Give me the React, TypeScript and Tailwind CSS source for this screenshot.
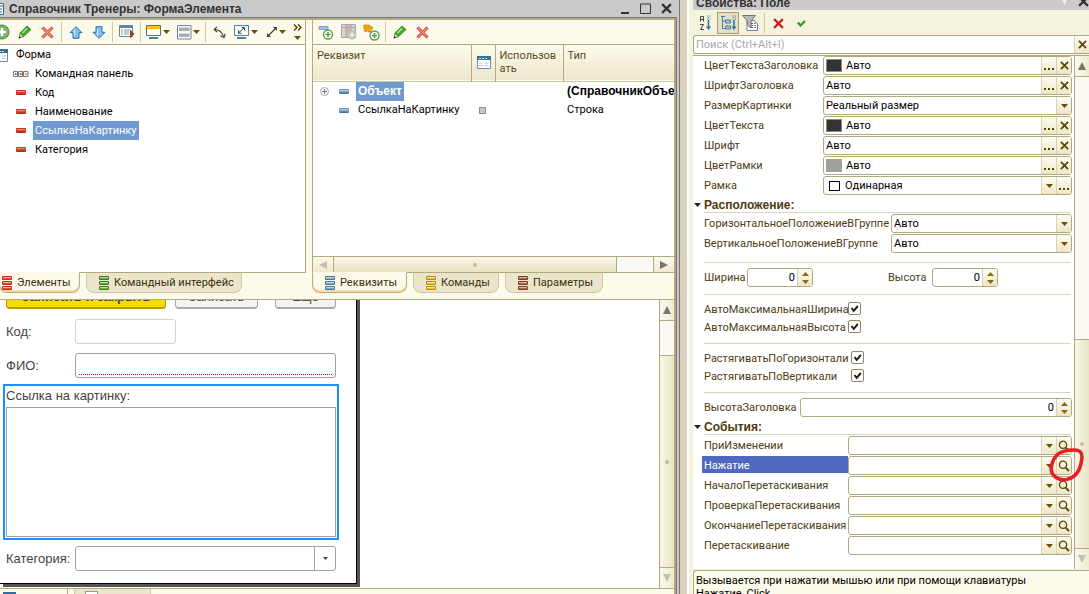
import { ReactNode, useId, useState } from 'react'
import clsx from 'clsx'

/* ---------- icons ---------- */

function Caret({ up = false, color = '#6b4f00' }: { up?: boolean; color?: string }) {
  return (
    <svg width="7" height="4" viewBox="0 0 7 4" className="shrink-0">
      <path d={up ? 'M0 4h7L3.5 0z' : 'M0 0h7L3.5 4z'} fill={color} />
    </svg>
  )
}

function CrossIcon({ size = 9, color = '#5c4600', width = 2 }: { size?: number; color?: string; width?: number }) {
  return (
    <svg width={size} height={size} viewBox="0 0 10 10" className="shrink-0">
      <path d="M1 1l8 8M9 1l-8 8" stroke={color} strokeWidth={width} fill="none" />
    </svg>
  )
}

function DotsIcon() {
  return (
    <svg width="11" height="11" viewBox="0 0 11 11">
      <path d="M0 8h2v2H0zM4 8h2v2H4zM8 8h2v2H8z" fill="#5c4600" />
    </svg>
  )
}

function SearchIcon() {
  return (
    <svg width="12" height="12" viewBox="0 0 12 12" fill="none" stroke="#5c4600">
      <circle cx="5" cy="4.8" r="3.6" strokeWidth="1.3" />
      <path d="M7.6 7.6l3.4 3.4" strokeWidth="1.9" />
    </svg>
  )
}

function PlusIcon() {
  return (
    <svg width="16" height="16" viewBox="0 0 16 16">
      <circle cx="8" cy="8" r="7" fill="#7cb56b" stroke="#4b8a3c" />
      <path d="M8 4v8M4 8h8" stroke="#fff" strokeWidth="2.4" />
    </svg>
  )
}

function PencilIcon() {
  return (
    <svg width="14" height="14" viewBox="0 0 14 14">
      <path d="M9 1l4 3.6-7.4 7L2 8z" fill="#3fae2a" stroke="#2b7d1c" strokeWidth=".8" />
      <path d="M9 3.4L4.4 8" stroke="#a6e38f" strokeWidth="1.5" />
      <path d="M2 8l3.6 3.6L1 13z" fill="#e8d9a0" stroke="#4a5a2c" strokeWidth=".7" />
      <path d="M.8 13.4l.6-2.2 1.6 1.5z" fill="#222" />
    </svg>
  )
}

function DeleteIcon() {
  return (
    <svg width="13" height="13" viewBox="0 0 13 13" fill="none">
      <path d="M1.5 1.5l10 10M11.5 1.5l-10 10" stroke="#cf3b31" strokeWidth="3" />
      <path d="M2 2l9 9M11 2l-9 9" stroke="#ff8a7d" strokeWidth="1.3" />
    </svg>
  )
}

function ArrowIcon({ down = false }: { down?: boolean }) {
  return (
    <svg width="14" height="13" viewBox="0 0 14 13">
      <path
        d={down ? 'M7 12.3L1 6.3h3v-5.6h6v5.6h3z' : 'M7 .7L1 6.7h3v5.6h6V6.7h3z'}
        fill="#7fc0f0"
        stroke="#2f6ea8"
        strokeLinejoin="round"
      />
      <path d="M5.5 3v7" stroke="#d3edff" />
    </svg>
  )
}

function ListRunIcon() {
  return (
    <svg width="16" height="14" viewBox="0 0 16 14">
      <path d="M.5.5h13v11H.5z" fill="#fff" stroke="#6b8499" />
      <path d="M1 1h12v2H1z" fill="#5b83a6" />
      <path d="M2 5h2M2 7h2M2 9h2M5 5h6M5 7h5M5 9h5" stroke="#7d93a5" />
      <path d="M11 4.5l4.5 4.5-4.5 4.5z" fill="#8a4a2a" />
    </svg>
  )
}

function ScreenIcon() {
  return (
    <svg width="16" height="16" viewBox="0 0 16 16">
      <path d="M.5 1.5h14v10H.5z" fill="#fffef8" stroke="#55728a" />
      <path d="M1 2h13v3H1z" fill="#ffc20e" />
      <path d="M3 14h9" stroke="#4f7ea6" strokeWidth="2" />
    </svg>
  )
}

function LayoutIcon() {
  return (
    <svg width="15" height="15" viewBox="0 0 15 15">
      <path d="M.5.5h13.500v13.500H.5z" fill="#fdfdfb" stroke="#6f8896" />
      <path d="M2 2.500h10.500v3.500H2zM2 8.500h10.500v3.500H2z" fill="#a9adaf" />
    </svg>
  )
}

function CurveIcon() {
  return (
    <svg width="13" height="13" viewBox="0 0 13 13" fill="none" stroke="#3c3c3c">
      <path d="M1.500 3.500c4.500 0 7.500 2.500 9 7" strokeWidth="1.100" />
      <path d="M4 .8L1.200 3.500 4 6" strokeWidth="1.100" />
      <path d="M7.500 9.800l3.500 1.700 1.200-3.500" strokeWidth="1.100" />
    </svg>
  )
}

function ScreenFitIcon() {
  return (
    <svg width="16" height="16" viewBox="0 0 16 16">
      <path d="M.5 1.500h14v10H.5z" fill="#f5fafd" stroke="#5b7f9e" />
      <path d="M5 8.500l5-4.500M7.500 3.500h3v3M4.500 6.500v2.800h3" fill="none" stroke="#444" />
      <path d="M3 14h9" stroke="#4f7ea6" strokeWidth="2" />
    </svg>
  )
}

function ExpandIcon() {
  return (
    <svg width="12" height="12" viewBox="0 0 12 12">
      <path d="M2 10l8-8" stroke="#444" strokeWidth="1.200" />
      <path d="M7 1h4v4zM1 7v4h4z" fill="#444" />
    </svg>
  )
}

function AddFieldIcon() {
  return (
    <svg width="16" height="16" viewBox="0 0 16 16">
      <path d="M1 2.500h9v3H1z" fill="#9dc2dd" stroke="#7ea3bd" />
      <circle cx="10" cy="10.500" r="4.500" fill="#fff" stroke="#5f9e4e" strokeWidth="1.400" />
      <path d="M10 8v5M7.500 10.500h5" stroke="#57a344" strokeWidth="1.600" />
    </svg>
  )
}

function AddColumnIcon() {
  return (
    <svg width="16" height="16" viewBox="0 0 16 16">
      <path d="M.5.500h14v13H.5z" fill="#d8d6d0" stroke="#a9a7a3" />
      <path d="M5 1h5v12H5z" fill="#d3b3b0" />
      <path d="M5 .5v13M10 .5v13M1 3.500h13" stroke="#a9a7a3" />
      <circle cx="11" cy="11" r="4.500" fill="#b9c7b2" />
      <path d="M11 8.500v5M8.500 11h5" stroke="#eef2ec" strokeWidth="1.500" />
    </svg>
  )
}

function AddPartIcon() {
  return (
    <svg width="17" height="17" viewBox="0 0 17 17">
      <path d="M.8 1h6v2l2-.8 1 2.600-2 1 .5 2.200H5.500L5 6.500 3 8 .8 6.500 3 4.500H.8z" fill="#f0a30a" stroke="#b87700" strokeWidth=".6" />
      <circle cx="11.500" cy="11.500" r="4.500" fill="#fff" stroke="#5f9e4e" strokeWidth="1.400" />
      <path d="M11.500 9v5M9 11.500h5" stroke="#57a344" strokeWidth="1.600" />
    </svg>
  )
}

function FormIcon() {
  return (
    <svg width="14" height="13" viewBox="0 0 14 13" className="shrink-0">
      <path d="M.5.500h13v12H.5z" fill="#fff" stroke="#6f8ea8" />
      <path d="M0 0h14v4H0z" fill="#356f9f" />
      <path d="M2 2.500h2M5 2.500h2M8 2.500h2" stroke="#cfe4f4" />
      <path d="M2 7h4M2 9.500h4M7.500 7h4M7.500 9.500h4" stroke="#b4c4d1" />
    </svg>
  )
}

function CommandBarIcon() {
  return (
    <svg width="16" height="6" viewBox="0 0 16 6" className="shrink-0">
      <path d="M.5.500h4v5h-4zM5.500.500h4v5h-4zM10.500.500h4.500v5h-4.500z" fill="#f4f4f4" stroke="#777" />
      <path d="M2 2h1.500v2H2z" fill="#3f73b5" />
      <path d="M7 2h1.500v2H7z" fill="#d33" />
      <path d="M12 2h1.500v2H12z" fill="#c9a12c" />
    </svg>
  )
}

function DashIcon({ fill, stroke }: { fill: string; stroke: string }) {
  return (
    <svg width="10" height="5" viewBox="0 0 10 5" className="shrink-0">
      <rect x="0" y="0" width="10" height="5" rx="1" fill={stroke} />
      <path d="M0 2h10" stroke={fill} strokeWidth="3" />
      <path d="M1 1.500h8" stroke="#fff" strokeOpacity=".4" />
    </svg>
  )
}

function StackIcon({ fill, stroke }: { fill: string; stroke: string }) {
  return (
    <svg width="10" height="14" viewBox="0 0 10 14" className="shrink-0">
      {[0, 5, 10].map(y => (
        <g key={y}>
          <rect x="0" y={y} width="10" height="4" rx="1" fill={stroke} />
          <path d={`M1 ${y + 2}h8`} stroke={fill} strokeWidth="2" />
          <path d={`M1 ${y + 1.5}h8`} stroke="#fff" strokeOpacity=".5" />
        </g>
      ))}
    </svg>
  )
}

function SortIcon() {
  return (
    <svg width="13" height="16" viewBox="0 0 13 16" fill="none">
      <path d="M1.500 6.500v-5h3v5M1.500 4.500h3M1 9.500h3.500L1.500 14.500h3.500" stroke="#444" />
      <path d="M9.500 5v8" stroke="#2d6ba0" strokeWidth="1.500" />
      <path d="M7 11.500h5L9.500 15z" fill="#2d6ba0" />
      <path d="M8 1h1M10.500 1h1M9 2.500h1M8 4h1M10.500 4h1" stroke="#2d6ba0" />
    </svg>
  )
}

function TreeSortIcon() {
  return (
    <svg width="17" height="16" viewBox="0 0 17 16" fill="none">
      <path d="M1 1.500h4M2.500 2v12M2.500 6h3M2.500 13.500h3" stroke="#4f7d9f" />
      <path d="M5.500 5h5v3h-5zM5.500 11h5v3h-5z" fill="#9cc3df" stroke="#4f7d9f" />
      <path d="M14 5v8" stroke="#2d6ba0" strokeWidth="1.500" />
      <path d="M11.500 11.500h5L14 15z" fill="#2d6ba0" />
      <path d="M12.500 1h1M15 1h1M13.500 2.500h1M12.500 4h1M15 4h1" stroke="#2d6ba0" />
    </svg>
  )
}

function FilterIcon() {
  return (
    <svg width="17" height="16" viewBox="0 0 17 16">
      <path d="M5 5.500h7l3.500 3v7H5z" fill="#fff" stroke="#5f87a8" />
      <path d="M.5.500h13L9 6v7L5.500 10V6z" fill="#b9bdc0" stroke="#6c7278" />
      <path d="M9 8.500h2M9 10.500h2M9 12.500h2" stroke="#d43c2c" />
      <path d="M12 8.500h2M12 10.500h2M12 12.500h2" stroke="#5f87a8" />
    </svg>
  )
}

/* ---------- small building blocks ---------- */

interface ToolButtonProps {
  label: string
  children: ReactNode
  menu?: boolean
  pressed?: boolean
}

function ToolButton({ label, children, menu, pressed }: ToolButtonProps) {
  return (
    <button
      aria-label={label}
      className={clsx(
        'flex shrink-0 items-center justify-center',
        menu ? 'h-5 w-[30px] gap-px' : pressed ? 'h-[22px] w-[22px] border border-[#a89d72] bg-[#e6e0c2]' : 'h-5 w-[23px]'
      )}
    >
      {children}
      {menu && <Caret />}
    </button>
  )
}

function ToolSeparator() {
  return <span className="mx-[2px] h-5 w-px shrink-0 bg-[#cfc8a5]" />
}

interface BottomTabProps {
  label: string
  fill: string
  stroke: string
  active: boolean
  onClick: () => void
  className?: string
}

function BottomTab({ label, fill, stroke, active, onClick, className }: BottomTabProps) {
  return (
    <button
      role="tab"
      aria-selected={active}
      onClick={onClick}
      className={clsx(
        'flex h-[21px] shrink-0 items-center gap-[5px] rounded-b-lg border whitespace-nowrap text-[#3c2f0c]',
        active
          ? 'border-[#b3a97f] border-t-[#fcfaeb] bg-[#fcfaeb] shadow-[inset_0_-2px_0_#f9dca0]'
          : 'border-[#cfc8a8] border-t-[#b3a97f] bg-[#ebe5cb]',
        className
      )}
    >
      <StackIcon fill={fill} stroke={stroke} />
      {label}
    </button>
  )
}

function ScrollButton({ label, dir, dim }: { label: string; dir: 'up' | 'down' | 'left' | 'right'; dim?: boolean }) {
  const paths = { up: 'M0 8h8L4 0z', down: 'M0 0h8L4 8z', left: 'M8 0v8L0 4z', right: 'M0 0v8l8-4z' }
  const vertical = dir === 'up' || dir === 'down'
  return (
    <button
      aria-label={label}
      className={clsx(
        'flex shrink-0 items-center justify-center from-[#fbf9ef] to-[#efeacf]',
        vertical ? 'h-5 w-full bg-linear-to-r' : 'h-full w-5 bg-linear-to-b'
      )}
    >
      <svg width="8" height="8" viewBox="0 0 8 8">
        <path d={paths[dir]} fill={dim ? '#c4c1b2' : '#77756b'} />
      </svg>
    </button>
  )
}

/* ---------- form structure ---------- */

const elements = ['Код', 'Наименование', 'СсылкаНаКартинку', 'Категория']

function ElementsPane() {
  const [selected, setSelected] = useState('СсылкаНаКартинку')
  const [tab, setTab] = useState(0)

  return (
    <div className="flex w-[306px] shrink-0 flex-col">
      <div className="flex h-6 items-center overflow-hidden border-r border-[#b3a97f]">
        <div className="-ml-[10px] flex items-center">
          <ToolButton label="Добавить"><PlusIcon /></ToolButton>
          <ToolButton label="Изменить"><PencilIcon /></ToolButton>
          <ToolButton label="Удалить"><DeleteIcon /></ToolButton>
          <ToolSeparator />
          <ToolButton label="Вверх"><ArrowIcon /></ToolButton>
          <ToolButton label="Вниз"><ArrowIcon down /></ToolButton>
          <ToolSeparator />
          <ToolButton label="Проверить"><ListRunIcon /></ToolButton>
          <ToolSeparator />
          <ToolButton label="Экран" menu><ScreenIcon /></ToolButton>
          <ToolButton label="Разметка" menu><LayoutIcon /></ToolButton>
          <ToolSeparator />
          <ToolButton label="Повернуть"><CurveIcon /></ToolButton>
          <ToolButton label="Масштаб" menu><ScreenFitIcon /></ToolButton>
          <ToolButton label="Размер" menu><ExpandIcon /></ToolButton>
          <button aria-label="Ещё команды" className="flex w-3 flex-col items-center gap-[5px]">
            <svg width="9" height="7" viewBox="0 0 9 7" fill="none" stroke="#5c4600" strokeWidth="1.500">
              <path d="M1 .5l3 3-3 3M5 .5l3 3-3 3" />
            </svg>
            <Caret />
          </button>
        </div>
      </div>

      <ul className="flex-1 border-t border-r border-b border-[#b3a97f] bg-white text-black">
        <li className="flex h-[19px] items-center gap-2 pt-px">
          <span className="-ml-[6px]"><FormIcon /></span>
          Форма
        </li>
        <li className="flex h-[19px] items-center gap-[6px] pt-px pl-[13px]">
          <CommandBarIcon />
          Командная панель
        </li>
        {elements.map(name => (
          <li key={name} className="flex h-[19px] items-center gap-[7px] pl-4">
            <DashIcon fill="#e2402c" stroke="#b52a1a" />
            <button
              onClick={() => setSelected(name)}
              className={clsx('h-[19px] pt-px pr-[2px] pl-[2px]', name === selected && 'bg-[#6f99d1] text-white')}
            >
              {name}
            </button>
          </li>
        ))}
      </ul>

      <div role="tablist" className="relative -mt-px mb-[6px] flex gap-[6px]">
        <BottomTab
          label="Элементы" fill="#f0543f" stroke="#c22c1a" active={tab === 0} onClick={() => setTab(0)}
          className="-ml-px w-[81px] pl-[2px]"
        />
        <BottomTab
          label="Командный интерфейс" fill="#6cb545" stroke="#3c7d22" active={tab === 1} onClick={() => setTab(1)}
          className="w-[156px] pl-3"
        />
      </div>
    </div>
  )
}

function AttributesPane() {
  const [tab, setTab] = useState(0)

  return (
    <div className="flex min-w-0 flex-1 flex-col">
      <div className="flex h-6 items-center border-l border-[#b3a97f] pl-px">
        <ToolButton label="Добавить реквизит"><AddFieldIcon /></ToolButton>
        <ToolButton label="Добавить колонку"><AddColumnIcon /></ToolButton>
        <ToolButton label="Добавить часть"><AddPartIcon /></ToolButton>
        <ToolSeparator />
        <ToolButton label="Изменить реквизит"><PencilIcon /></ToolButton>
        <ToolButton label="Удалить реквизит"><DeleteIcon /></ToolButton>
      </div>

      <div className="flex min-h-0 flex-1 flex-col border border-r-0 border-[#b3a97f] bg-white">
        <div className="flex-1 overflow-hidden">
          <table className="w-full table-fixed border-collapse text-black">
            <colgroup>
              <col className="w-[158px]" />
              <col className="w-6" />
              <col className="w-[68px]" />
              <col />
            </colgroup>
            <thead>
              <tr className="h-9 border-b border-[#cfc8a5] bg-linear-to-b from-[#fcfaeb] to-[#ece7cb] text-left align-top leading-[13px] text-[#5c4a1c]">
                <th className="border-r border-[#b3a97f] pt-1 pl-1 font-normal">Реквизит</th>
                <th className="border-r border-[#b3a97f] pt-[11px] pl-[5px]"><FormIcon /></th>
                <th className="border-r border-[#b3a97f] pt-1 pr-[6px] pl-1 font-normal break-all">Использовать</th>
                <th className="pt-1 pl-1 font-normal">Тип</th>
              </tr>
            </thead>
            <tbody>
              <tr className="h-[19px]">
                <td className="p-0">
                  <div className="flex items-center pl-[7px]">
                    <button aria-label="Развернуть">
                      <svg width="9" height="9" viewBox="0 0 9 9" fill="none" stroke="#777">
                        <circle cx="4.500" cy="4.500" r="4" stroke="#aaa" />
                        <path d="M4.500 2v5M2 4.500h5" />
                      </svg>
                    </button>
                    <span className="mr-[7px] ml-[10px]"><DashIcon fill="#82a9c8" stroke="#4b7699" /></span>
                    <span className="h-[19px] bg-[#6f99d1] px-[2px] font-['Liberation_Sans',sans-serif] text-[12px] leading-[19px] font-bold text-white">
                      Объект
                    </span>
                  </div>
                </td>
                <td />
                <td />
                <td className="overflow-hidden p-0 pl-1 font-['Liberation_Sans',sans-serif] text-[12px] font-bold whitespace-nowrap">
                  (СправочникОбъек
                </td>
              </tr>
              <tr className="h-[19px]">
                <td className="p-0">
                  <div className="flex items-center pl-[26px]">
                    <span className="mr-[9px]"><DashIcon fill="#82a9c8" stroke="#4b7699" /></span>
                    СсылкаНаКартинку
                  </div>
                </td>
                <td className="p-0 pl-2">
                  <span className="block h-[7px] w-[7px] border border-[#8f8f8f] bg-[#c4c4c4]" />
                </td>
                <td />
                <td className="p-0 pl-1">Строка</td>
              </tr>
            </tbody>
          </table>
        </div>
        <div className="flex h-4 shrink-0 border-t border-[#b3a97f]">
          <ScrollButton label="Влево" dir="left" dim />
          <div className="flex flex-1 items-center justify-center border-x border-[#b3a97f] bg-linear-to-b from-[#f8f6e6] to-[#e9e4c4]">
            <span className="h-1 w-1 rounded-full bg-[#c2bc9c]" />
          </div>
          <div className="w-[37px] border-r border-[#b3a97f] bg-[#faf9f3]" />
          <ScrollButton label="Вправо" dir="right" />
        </div>
      </div>

      <div role="tablist" className="relative -mt-px mb-[6px] flex gap-[6px]">
        <BottomTab
          label="Реквизиты" fill="#86abc9" stroke="#4b7699" active={tab === 0} onClick={() => setTab(0)}
          className="w-[95px] pl-3"
        />
        <BottomTab
          label="Команды" fill="#f0c23a" stroke="#b58a16" active={tab === 1} onClick={() => setTab(1)}
          className="w-[86px] pl-3"
        />
        <BottomTab
          label="Параметры" fill="#b5674a" stroke="#7c3c25" active={tab === 2} onClick={() => setTab(2)}
          className="w-[98px] pl-3"
        />
      </div>
    </div>
  )
}

function FormPreview() {
  return (
    <div className="flex min-h-0 flex-1 border-y border-[#b3a97f] bg-white">
      <div className="min-w-0 flex-1 overflow-hidden font-['Liberation_Sans',sans-serif] text-[13px] text-[#444]">
        <form className="w-[357px] border-r border-b border-black pb-3 shadow-[3px_3px_0_#555]">
          <div className="-mt-[15px] flex pl-[6px]">
            <button type="button" className="h-6 w-40 rounded-sm border border-b-2 border-[#b39b00] bg-[#f8dc00] font-bold">
              Записать и закрыть
            </button>
            <button type="button" className="ml-[9px] h-6 w-[83px] rounded-sm border border-b-2 border-[#a9a9a9] bg-[#f3f3f3]">
              Записать
            </button>
            <button type="button" className="ml-[17px] h-6 w-[61px] rounded-sm border border-b-2 border-[#a9a9a9] bg-[#f3f3f3]">
              Ещё
            </button>
          </div>
          <div className="mt-[10px] flex items-center pl-[6px]">
            <label htmlFor="code" className="w-[69px]">Код:</label>
            <input id="code" className="h-[25px] w-[101px] rounded-[3px] border border-[#d3d3d3] px-1" />
          </div>
          <div className="mt-[9px] flex items-center pl-[6px]">
            <label htmlFor="fio" className="w-[69px]">ФИО:</label>
            <div className="h-[25px] w-[261px] rounded-[3px] border border-[#a0a0a0] px-[3px] pb-[2px]">
              <input id="fio" className="block h-[21px] w-full border-b border-dotted border-[#e00000] outline-none" />
            </div>
          </div>
          <div className="mt-[6px] ml-[3px] flex h-[156px] w-[336px] flex-col border-2 border-[#1e8fff] px-px pb-px">
            <label htmlFor="link" className="h-[21px] leading-[20px]">Ссылка на картинку:</label>
            <textarea id="link" className="w-full flex-1 resize-none border border-[#a0a0a0]" />
          </div>
          <div className="mt-[6px] flex items-center pl-[6px]">
            <label htmlFor="category" className="w-[69px]">Категория:</label>
            <div className="flex h-[25px] w-[261px] rounded-[3px] border border-[#a0a0a0]">
              <input id="category" className="min-w-0 flex-1 px-1" />
              <button type="button" aria-label="Выбрать" className="flex w-[21px] items-center justify-center border-l border-[#a0a0a0]">
                <svg width="5" height="3" viewBox="0 0 5 3"><path d="M0 0h5L2.500 3z" fill="#444" /></svg>
              </button>
            </div>
          </div>
        </form>
      </div>
      <div className="flex w-[15px] shrink-0 flex-col border-l border-[#b3a97f]">
        <ScrollButton label="Вверх" dir="up" />
        <div className="h-[35px] border-t border-[#b3a97f] bg-[#faf9f3]" />
        <div className="flex flex-1 items-center justify-center border-y border-[#b3a97f] bg-linear-to-r from-[#f8f6e6] to-[#e9e4c4]">
          <span className="h-1 w-1 rounded-full bg-[#c2bc9c]" />
        </div>
        <ScrollButton label="Вниз" dir="down" dim />
      </div>
    </div>
  )
}

function FormWindow() {
  return (
    <div className="flex min-w-0 flex-1 flex-col border-r border-[#777] bg-[#cacaca] pr-[2px]">
      <header className="flex h-[17px] shrink-0 items-center overflow-hidden">
        <svg width="4" height="12" viewBox="0 0 4 12" className="mr-[5px] shrink-0">
          <path d="M0 .5h3.500v11H0" fill="#fff" stroke="#3d6d94" />
          <path d="M0 3h3M0 6h2M0 9h2" stroke="#3d6d94" />
        </svg>
        <h1 className="flex-1 font-['Liberation_Sans',sans-serif] text-[12px] leading-4 font-bold whitespace-nowrap text-[#333]">
          Справочник Тренеры: ФормаЭлемента
        </h1>
        <div className="flex items-center gap-[10px] pr-[5px]">
          <button aria-label="Свернуть">
            <svg width="9" height="11" viewBox="0 0 9 11"><path d="M0 10h8" stroke="#333" strokeWidth="2" /></svg>
          </button>
          <button aria-label="Развернуть окно">
            <svg width="11" height="11" viewBox="0 0 11 11"><path d="M.5 1h10v9.500H.5z" fill="none" stroke="#333" /></svg>
          </button>
          <button aria-label="Закрыть"><CrossIcon size={11} color="#333" /></button>
        </div>
      </header>
      <div className="flex min-h-0 flex-1 flex-col border-t border-r border-[#777]">
        <div className="flex min-h-0 flex-1 flex-col border-t-2 border-r-2 border-[#b3a97f] bg-[#fcfaeb]">
          <div className="flex h-[279px] shrink-0 gap-[6px]">
            <ElementsPane />
            <AttributesPane />
          </div>
          <FormPreview />
          <div className="flex h-[5px] shrink-0 overflow-hidden">
            <div className="w-[68px] border-r border-[#b3a97f] pt-[3px] pl-[3px]">
              <div className="h-[2px] w-[13px] bg-[#356f9f]" />
            </div>
            <div className="ml-[6px] w-[77px] border-x border-[#cfc8a8] bg-[#ebe5cb] pt-[2px] pl-[10px]">
              <div className="h-[6px] w-[13px] border border-[#8b9aa8] bg-white" />
            </div>
          </div>
        </div>
      </div>
    </div>
  )
}

/* ---------- properties ---------- */

const fieldBox = 'flex h-[19px] min-w-0 overflow-hidden rounded-[3px] border border-[#b3a97f] bg-white text-black'

function FieldButton({ label, children }: { label: string; children: ReactNode }) {
  return (
    <button
      aria-label={label}
      className="flex w-[15px] shrink-0 items-center justify-center border-l border-[#d8d2b3] bg-linear-to-b from-[#fdfcf3] to-[#ece6c8]"
    >
      {children}
    </button>
  )
}

interface PropertyRowProps {
  name: string
  value?: string
  kind: 'pick' | 'select' | 'border' | 'event'
  swatch?: ReactNode
  labelWidth: string
  selected?: boolean
  children?: ReactNode
}

function PropertyRow({ name, value = '', kind, swatch, labelWidth, selected, children }: PropertyRowProps) {
  const id = useId()
  return (
    <div className="relative flex h-5 items-start">
      <label
        htmlFor={id}
        className={clsx(
          'h-[17px] shrink-0 pl-[2px] leading-[19px] whitespace-nowrap',
          labelWidth,
          selected ? 'bg-[#4f69c0] text-white' : 'text-[#4d3b10]'
        )}
      >
        {name}
      </label>
      <div className={clsx(fieldBox, 'flex-1 items-stretch')}>
        {swatch && <span className="ml-[2px] flex w-4 shrink-0 items-center justify-center">{swatch}</span>}
        {kind === 'select' || kind === 'border' ? (
          <select id={id} className={clsx('min-w-0 flex-1 appearance-none pt-px outline-none', swatch ? 'pl-[3px]' : 'pl-[2px]')}>
            <option>{value}</option>
          </select>
        ) : (
          <input
            id={id}
            defaultValue={value}
            className={clsx('min-w-0 flex-1 pt-px outline-none', swatch ? 'pl-[4px]' : 'pl-[2px]')}
          />
        )}
        {kind === 'pick' && (
          <>
            <FieldButton label={`${name}: выбрать`}><DotsIcon /></FieldButton>
            <FieldButton label={`${name}: очистить`}><CrossIcon /></FieldButton>
          </>
        )}
        {kind !== 'pick' && <FieldButton label={`${name}: список`}><Caret /></FieldButton>}
        {kind === 'border' && <FieldButton label={`${name}: выбрать`}><DotsIcon /></FieldButton>}
        {kind === 'event' && <FieldButton label={`${name}: открыть`}><SearchIcon /></FieldButton>}
      </div>
      {children}
    </div>
  )
}

function NumberField({ name, labelWidth, className }: { name: string; labelWidth: string; className: string }) {
  const id = useId()
  return (
    <div className="flex items-start">
      <label htmlFor={id} className={clsx('shrink-0 leading-[19px] text-[#4d3b10]', labelWidth)}>{name}</label>
      <div className={clsx(fieldBox, className)}>
        <input id={id} defaultValue="0" className="min-w-0 flex-1 pt-px pr-[2px] text-right outline-none" />
        <div className="flex w-[15px] shrink-0 flex-col items-center justify-center gap-1 border-l border-[#d8d2b3] bg-linear-to-b from-[#fdfcf3] to-[#ece6c8]">
          <button aria-label={`${name}: больше`}><Caret up color="#8a6a10" /></button>
          <button aria-label={`${name}: меньше`}><Caret color="#8a6a10" /></button>
        </div>
      </div>
    </div>
  )
}

function CheckRow({ name, labelWidth }: { name: string; labelWidth: string }) {
  const [checked, setChecked] = useState(true)
  const id = useId()
  return (
    <div className="flex h-[18px] items-start pl-[2px]">
      <label htmlFor={id} className={clsx('leading-[15px]', 'text-[#4d3b10]', labelWidth)}>{name}</label>
      <span className="relative h-[13px] w-[13px]">
        <input
          id={id}
          type="checkbox"
          checked={checked}
          onChange={e => setChecked(e.target.checked)}
          className="block h-[13px] w-[13px] appearance-none rounded-[2px] border border-[#8f8560] bg-white"
        />
        {checked && (
          <svg width="13" height="13" viewBox="0 0 13 13" className="pointer-events-none absolute inset-0">
            <path d="M3.500 6l2.200 2.800L9.800 4" fill="none" stroke="#222" strokeWidth="2" />
          </svg>
        )}
      </span>
    </div>
  )
}

function SectionTitle({ children }: { children: ReactNode }) {
  return (
    <h3 className="-ml-2 flex h-4 items-center pt-[2px] font-['Liberation_Sans',sans-serif] text-[12px] font-bold text-[#4d3b10]">
      <svg width="7" height="4" viewBox="0 0 7 4" className="mr-[3px]"><path d="M0 0h7L3.500 4z" fill="#222" /></svg>
      <span>{children}</span>
    </h3>
  )
}

function Rule({ className }: { className?: string }) {
  return <hr className={clsx('mr-px ml-[2px] border-[#d9d4bd]', className)} />
}

const darkSwatch = <span className="h-[13px] w-4 border border-[#8a8a8a] bg-[#333]" />
const graySwatch = <span className="h-[13px] w-4 bg-[#a0a0a0]" />
const frameSwatch = <span className="h-[10px] w-[11px] border border-black" />

const events = [
  'ПриИзменении',
  'Нажатие',
  'НачалоПеретаскивания',
  'ПроверкаПеретаскивания',
  'ОкончаниеПеретаскивания',
  'Перетаскивание',
]

function PropertiesPanel() {
  return (
    <aside className="flex w-[396px] shrink-0 flex-col bg-[#f5f2dd]">
      <header className="flex h-[10px] shrink-0 items-end overflow-hidden bg-[#cacaca]">
        <h2 className="flex-1 pl-[3px] font-['Liberation_Sans',sans-serif] text-[12px] leading-[14px] font-bold text-[#333]">
          Свойства: Поле
        </h2>
        <button aria-label="Закрепить" className="mb-[5px]">
          <svg width="6" height="7" viewBox="0 0 6 7"><path d="M1 0h3v3H1zM0 3h5v1H0zM2 4h1v3H2z" fill="#f2f2f2" /></svg>
        </button>
        <button aria-label="Закрыть свойства" className="mb-[3px] ml-[10px]"><CrossIcon size={11} color="#333" /></button>
      </header>

      <div className="flex h-[25px] shrink-0 items-center pt-px pl-px">
        <ToolButton label="По алфавиту"><SortIcon /></ToolButton>
        <ToolButton label="По категориям" pressed><TreeSortIcon /></ToolButton>
        <ToolButton label="Только важные"><FilterIcon /></ToolButton>
        <ToolSeparator />
        <ToolButton label="Отменить"><CrossIcon size={11} color="#c81e1e" /></ToolButton>
        <ToolButton label="Применить">
          <svg width="9" height="7" viewBox="0 0 9 7" fill="none"><path d="M1 2.500l2.500 3L8 1" stroke="#2f9a1a" strokeWidth="2.200" /></svg>
        </ToolButton>
      </div>

      <div className="flex h-[19px] shrink-0 overflow-hidden rounded-l-[3px] border border-r-0 border-[#b3a97f] bg-white">
        <input
          aria-label="Поиск"
          placeholder="Поиск (Ctrl+Alt+I)"
          className="min-w-0 flex-1 pt-px pl-[2px] outline-none placeholder:text-[#a9a9a9]"
        />
        <FieldButton label="Очистить поиск"><CrossIcon /></FieldButton>
      </div>

      <div className="mt-px flex min-h-0 flex-1 border-t border-[#b3a97f] bg-white">
        <div className="min-w-0 flex-1 pr-[2px] pl-[9px]">
          <PropertyRow name="ЦветТекстаЗаголовка" value="Авто" kind="pick" swatch={darkSwatch} labelWidth="w-[121px]" />
          <PropertyRow name="ШрифтЗаголовка" value="Авто" kind="pick" labelWidth="w-[121px]" />
          <PropertyRow name="РазмерКартинки" value="Реальный размер" kind="select" labelWidth="w-[121px]" />
          <PropertyRow name="ЦветТекста" value="Авто" kind="pick" swatch={darkSwatch} labelWidth="w-[121px]" />
          <PropertyRow name="Шрифт" value="Авто" kind="pick" labelWidth="w-[121px]" />
          <PropertyRow name="ЦветРамки" value="Авто" kind="pick" swatch={graySwatch} labelWidth="w-[121px]" />
          <PropertyRow name="Рамка" value="Одинарная" kind="border" swatch={frameSwatch} labelWidth="w-[121px]" />

          <SectionTitle>Расположение:</SectionTitle>
          <Rule className="mb-px" />
          <PropertyRow name="ГоризонтальноеПоложениеВГруппе" value="Авто" kind="select" labelWidth="w-[189px]" />
          <PropertyRow name="ВертикальноеПоложениеВГруппе" value="Авто" kind="select" labelWidth="w-[189px]" />

          <Rule className="mt-2 mb-[5px]" />
          <div className="grid grid-cols-2 pl-[2px]">
            <NumberField name="Ширина" labelWidth="w-[43px]" className="w-[66px]" />
            <NumberField name="Высота" labelWidth="w-[44px]" className="w-[66px]" />
          </div>

          <Rule className="my-[7px]" />
          <CheckRow name="АвтоМаксимальнаяШирина" labelWidth="w-[144px]" />
          <CheckRow name="АвтоМаксимальнаяВысота" labelWidth="w-[144px]" />

          <Rule className="mt-[5px] mb-[7px]" />
          <CheckRow name="РастягиватьПоГоризонтали" labelWidth="w-[147px]" />
          <CheckRow name="РастягиватьПоВертикали" labelWidth="w-[147px]" />

          <Rule className="my-[5px]" />
          <div className="pl-[2px]">
            <NumberField name="ВысотаЗаголовка" labelWidth="w-24" className="flex-1" />
          </div>

          <div className="mt-px"><SectionTitle>События:</SectionTitle></div>
          <Rule className="mb-px" />
          {events.map(name => (
            <PropertyRow key={name} name={name} kind="event" labelWidth="w-[146px]" selected={name === 'Нажатие'}>
              {name === 'Нажатие' && (
                <svg
                  width="36" height="36" viewBox="0 0 36 36" fill="none"
                  className="pointer-events-none absolute -top-[9px] -right-3 z-10"
                >
                  <path
                    d="M34 10C34 4 31 3 26 3C20 3 13 4 9 8C4 13 2 21 4 26C7 32 15 34 20 32C28 30 33 22 34 10"
                    stroke="#ea1c24" strokeWidth="3.500" strokeLinecap="round"
                  />
                </svg>
              )}
            </PropertyRow>
          ))}
        </div>
        <div className="flex w-[15px] shrink-0 flex-col border-l border-[#b3a97f]">
          <ScrollButton label="Прокрутить вверх" dir="up" />
          <div className="h-[263px] border-t border-[#b3a97f] bg-[#faf9f3]" />
          <div className="flex flex-1 items-center justify-center border-y border-[#b3a97f] bg-linear-to-r from-[#f8f6e6] to-[#e9e4c4]">
            <span className="h-1 w-1 rounded-full bg-[#c2bc9c]" />
          </div>
          <ScrollButton label="Прокрутить вниз" dir="down" dim />
        </div>
      </div>

      <p className="mt-px h-6 shrink-0 overflow-hidden rounded-tl-[3px] border-t border-l border-[#b3a97f] bg-[#fcfaeb] pt-[3px] pl-[2px] leading-[13px] text-black">
        Вызывается при нажатии мышью или при помощи клавиатуры
        <br />
        Нажатие, Click
      </p>
    </aside>
  )
}

export default function App() {
  return (
    <main className="flex h-screen w-full overflow-hidden bg-[#f5f2dd] font-[Roboto,'Liberation_Sans',sans-serif] text-[11px] leading-4">
      <FormWindow />
      <div className="w-[13px] shrink-0 border-r-4 border-[#f5f2dd] bg-white">
        <div className="h-full w-[7px] bg-[#d8d2bd]" />
      </div>
      <PropertiesPanel />
    </main>
  )
}
